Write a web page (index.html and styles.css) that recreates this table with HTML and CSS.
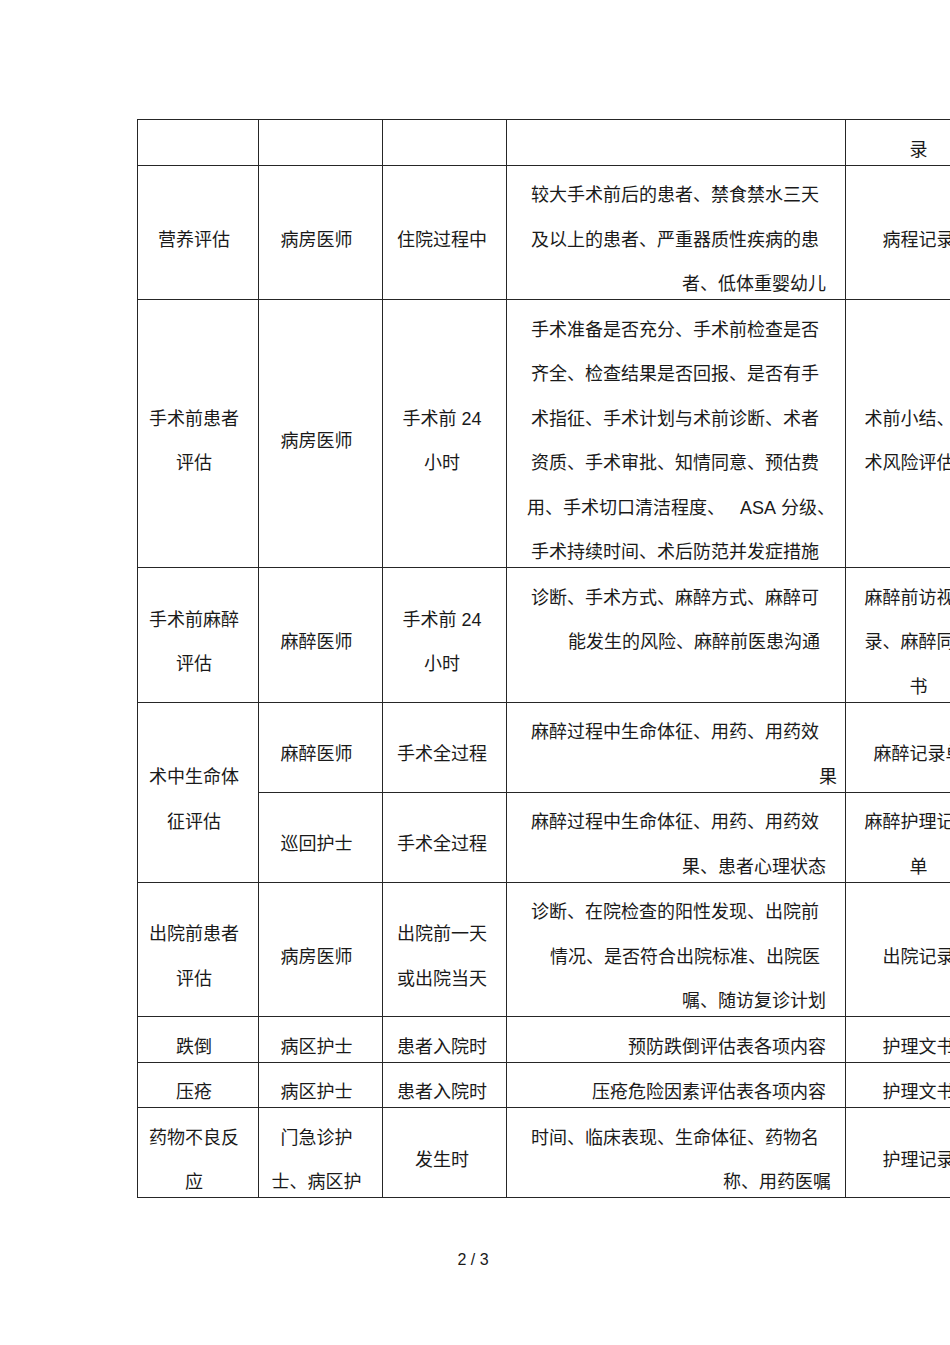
FILE: index.html
```html
<!DOCTYPE html>
<html lang="zh-CN">
<head>
<meta charset="utf-8">
<title>评估项目 2/3</title>
<link rel="stylesheet" href="styles.css">
</head>
<body>
<div class="page">
  <table class="grid">
    <colgroup>
      <col class="c1"><col class="c2"><col class="c3"><col class="c4"><col class="c5">
    </colgroup>
    <tbody>
      <tr>
        <td class="k1"></td>
        <td class="k2"></td>
        <td class="k3"></td>
        <td class="k4"></td>
        <td class="k5"><div class="ln">录</div></td>
      </tr>
      <tr>
        <td class="k1"><div class="ln">营养评估</div></td>
        <td class="k2"><div class="ln">病房医师</div></td>
        <td class="k3"><div class="ln">住院过程中</div></td>
        <td class="k4">
          <div class="ln l">较大手术前后的患者、禁食禁水三天</div>
          <div class="ln l">及以上的患者、严重器质性疾病的患</div>
          <div class="ln r">者、低体重婴幼儿</div>
        </td>
        <td class="k5"><div class="ln">病程记录</div></td>
      </tr>
      <tr>
        <td class="k1"><div class="ln">手术前患者</div><div class="ln">评估</div></td>
        <td class="k2"><div class="ln">病房医师</div></td>
        <td class="k3"><div class="ln">手术前 <span class="num">24</span></div><div class="ln">小时</div></td>
        <td class="k4">
          <div class="ln l">手术准备是否充分、手术前检查是否</div>
          <div class="ln l">齐全、检查结果是否回报、是否有手</div>
          <div class="ln l">术指征、手术计划与术前诊断、术者</div>
          <div class="ln l">资质、手术审批、知情同意、预估费</div>
          <div class="ln w">用、手术切口清洁程度、&nbsp;&nbsp;&nbsp;<span class="num">ASA</span> 分级、</div>
          <div class="ln l">手术持续时间、术后防范并发症措施</div>
        </td>
        <td class="k5"><div class="ln">术前小结、手</div><div class="ln">术风险评估表</div></td>
      </tr>
      <tr>
        <td class="k1"><div class="ln">手术前麻醉</div><div class="ln">评估</div></td>
        <td class="k2"><div class="ln">麻醉医师</div></td>
        <td class="k3"><div class="ln">手术前 <span class="num">24</span></div><div class="ln">小时</div></td>
        <td class="k4 top">
          <div class="ln l">诊断、手术方式、麻醉方式、麻醉可</div>
          <div class="ln r-a">能发生的风险、麻醉前医患沟通</div>
        </td>
        <td class="k5"><div class="ln">麻醉前访视记</div><div class="ln">录、麻醉同意</div><div class="ln">书</div></td>
      </tr>
      <tr>
        <td class="k1" rowspan="2"><div class="ln">术中生命体</div><div class="ln">征评估</div></td>
        <td class="k2"><div class="ln">麻醉医师</div></td>
        <td class="k3"><div class="ln">手术全过程</div></td>
        <td class="k4">
          <div class="ln l">麻醉过程中生命体征、用药、用药效</div>
          <div class="ln r-b">果</div>
        </td>
        <td class="k5"><div class="ln">麻醉记录单</div></td>
      </tr>
      <tr>
        <td class="k2"><div class="ln">巡回护士</div></td>
        <td class="k3"><div class="ln">手术全过程</div></td>
        <td class="k4">
          <div class="ln l">麻醉过程中生命体征、用药、用药效</div>
          <div class="ln r">果、患者心理状态</div>
        </td>
        <td class="k5"><div class="ln">麻醉护理记录</div><div class="ln">单</div></td>
      </tr>
      <tr>
        <td class="k1"><div class="ln">出院前患者</div><div class="ln">评估</div></td>
        <td class="k2"><div class="ln">病房医师</div></td>
        <td class="k3"><div class="ln">出院前一天</div><div class="ln">或出院当天</div></td>
        <td class="k4">
          <div class="ln l">诊断、在院检查的阳性发现、出院前</div>
          <div class="ln r-a">情况、是否符合出院标准、出院医</div>
          <div class="ln r">嘱、随访复诊计划</div>
        </td>
        <td class="k5"><div class="ln">出院记录</div></td>
      </tr>
      <tr>
        <td class="k1"><div class="ln">跌倒</div></td>
        <td class="k2"><div class="ln">病区护士</div></td>
        <td class="k3"><div class="ln">患者入院时</div></td>
        <td class="k4"><div class="ln r">预防跌倒评估表各项内容</div></td>
        <td class="k5"><div class="ln">护理文书</div></td>
      </tr>
      <tr>
        <td class="k1"><div class="ln">压疮</div></td>
        <td class="k2"><div class="ln">病区护士</div></td>
        <td class="k3"><div class="ln">患者入院时</div></td>
        <td class="k4"><div class="ln r">压疮危险因素评估表各项内容</div></td>
        <td class="k5"><div class="ln">护理文书</div></td>
      </tr>
      <tr>
        <td class="k1"><div class="ln">药物不良反</div><div class="ln">应</div></td>
        <td class="k2"><div class="ln">门急诊护</div><div class="ln">士、病区护</div></td>
        <td class="k3"><div class="ln">发生时</div></td>
        <td class="k4">
          <div class="ln l">时间、临床表现、生命体征、药物名</div>
          <div class="ln r-c">称、用药医嘱</div>
        </td>
        <td class="k5"><div class="ln">护理记录</div></td>
      </tr>
    </tbody>
  </table>
  <div class="folio">2 / 3</div>
</div>
</body>
</html>
```

FILE: styles.css
```css
html, body {
  margin: 0;
  padding: 0;
  background: #ffffff;
}

body {
  font-family: "Liberation Sans", "Noto Sans CJK SC", sans-serif;
  color: #1a1a1a;
}

.page {
  width: 950px;
  overflow: hidden;
  padding-top: 119px;
  padding-bottom: 60px;
}

.grid {
  margin-left: 137px;
  width: 854px;
  table-layout: fixed;
  border-collapse: collapse;
  font-size: 18px;
}

.c1 { width: 121px; }
.c2 { width: 124px; }
.c3 { width: 124px; }
.c4 { width: 339px; }
.c5 { width: 146px; }

.grid td {
  border: 1px solid #262626;
  padding: 0;
  vertical-align: middle;
  white-space: nowrap;
}

.grid td.top {
  vertical-align: top;
}

.ln {
  line-height: 18px;
  padding: 20.5px 0 6px;
}

.num {
  font-family: "Liberation Sans", sans-serif;
}

.k1 { text-align: center; padding-right: 8px !important; }
.k2 { text-align: center; padding-right: 8px !important; }
.k3 { text-align: center; padding-right: 5px !important; }
.k4 { text-align: left; }
.k5 { text-align: center; }

.k4 .l { padding-left: 24px; }
.k4 .w { padding-left: 20px; }
.k4 .r { text-align: right; padding-right: 19px; }
.k4 .r-a { text-align: right; padding-right: 25px; }
.k4 .r-b { text-align: right; padding-right: 8px; }
.k4 .r-c { text-align: right; padding-right: 14px; }

.folio {
  margin-top: 52px;
  text-align: center;
  font-size: 16px;
  line-height: 20px;
  color: #1a1a1a;
  padding-right: 4px;
}
```
